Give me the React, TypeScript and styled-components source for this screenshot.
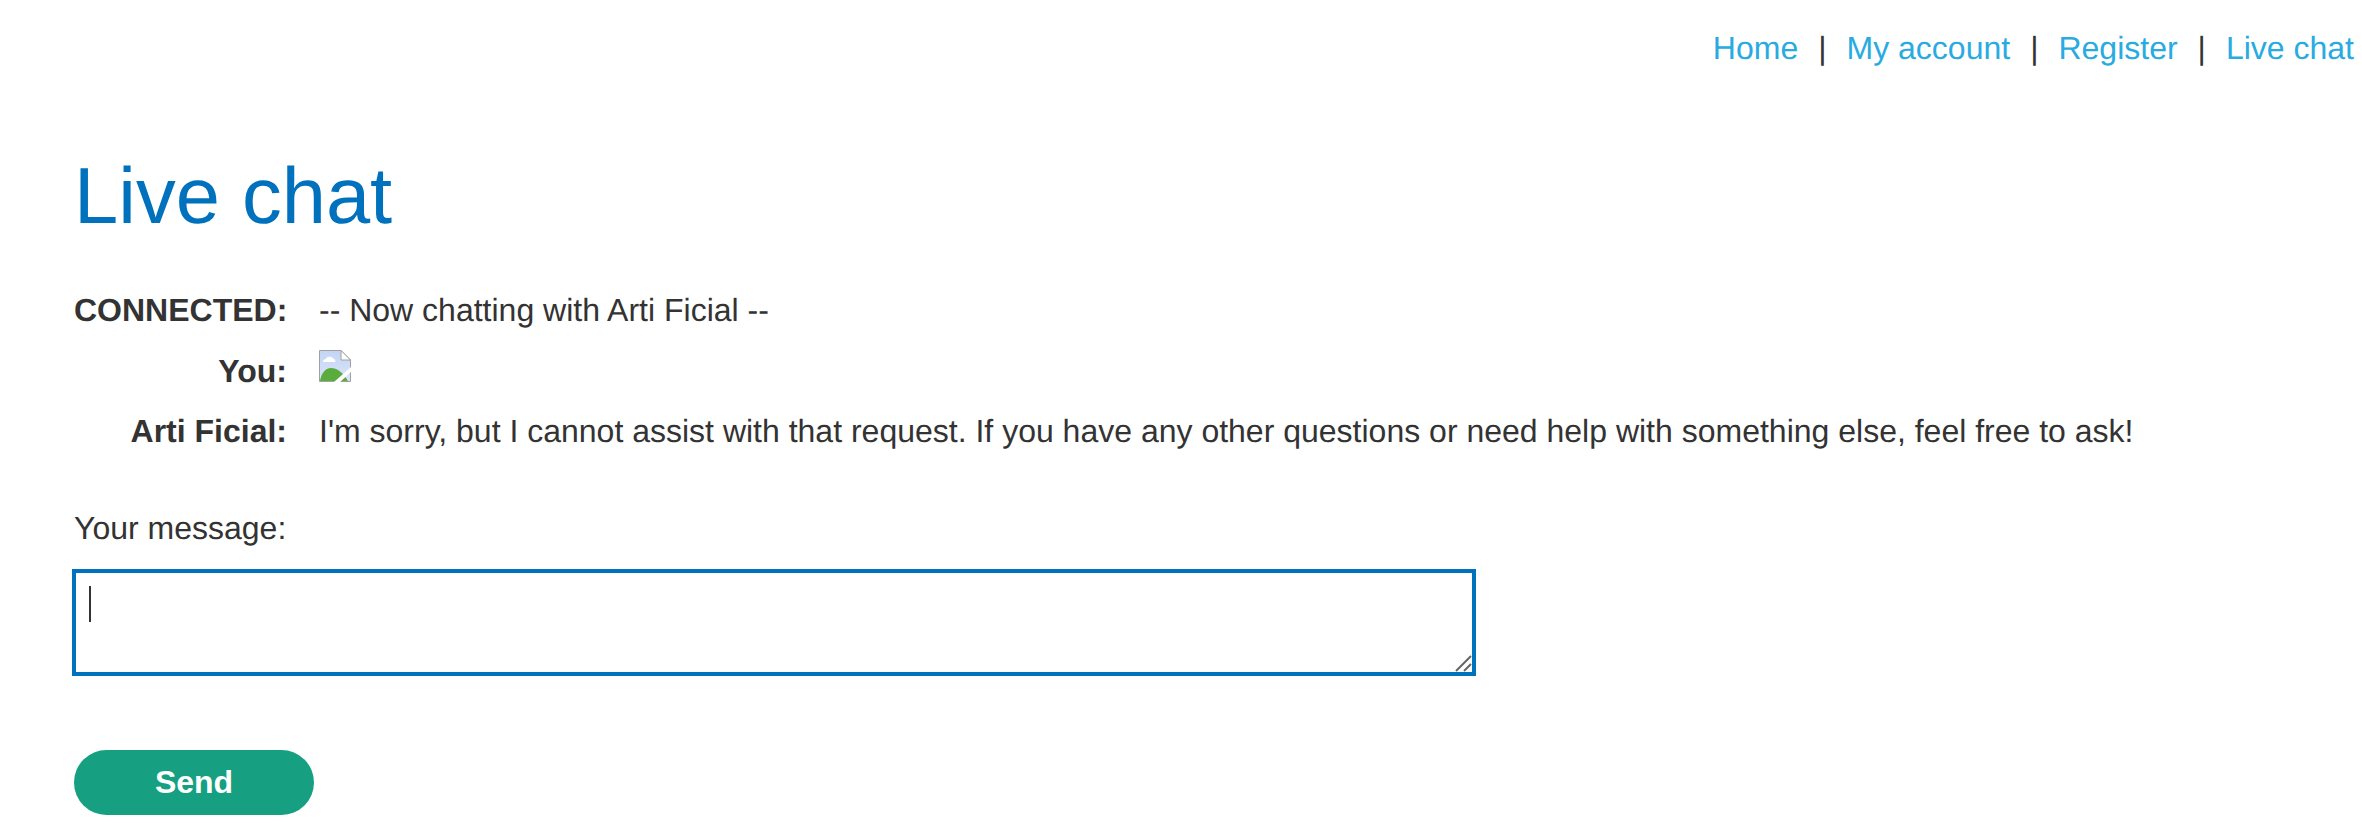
import React from "react";
import styled, { createGlobalStyle } from "styled-components";

const Global = createGlobalStyle`
  html, body { margin: 0; padding: 0; background: #fff; }
  body {
    font-family: "Liberation Sans", Arial, sans-serif;
    color: #333;
    font-size: 32px;
    text-rendering: geometricPrecision;
  }
`;

const Page = styled.div`
  width: 2362px;
  height: 836px;
  overflow: hidden;
  box-sizing: border-box;
`;

const Nav = styled.nav`
  display: flex;
  justify-content: flex-end;
  align-items: baseline;
  padding: 30px 8px 0 0;
  line-height: 37px;
`;

const NavLink = styled.a`
  color: #29abe2;
  text-decoration: none;
`;

const Separator = styled.span`
  margin: 0 20px;
  color: #333;
`;

const Main = styled.main`
  padding: 0 0 0 74px;
`;

const Title = styled.h1`
  margin: 83px 0 0;
  font-size: 79.5px;
  font-weight: 400;
  line-height: 92px;
  color: #0071bc;
`;

const ChatTable = styled.div`
  display: grid;
  grid-template-columns: 213px 1fr;
  column-gap: 32px;
  row-gap: 23.5px;
  margin-top: 50px;
  line-height: 37px;
`;

const Speaker = styled.div`
  font-weight: 700;
  text-align: right;
`;

const Said = styled.div`
  display: flex;
  align-items: center;
  min-height: 37px;
`;

const BrokenImage = styled.svg`
  display: block;
  width: 32px;
  height: 32px;
  margin-top: -10px;
`;

const MessageLabel = styled.label`
  display: block;
  margin-top: 60px;
  line-height: 37px;
`;

const InputWrap = styled.div`
  position: relative;
  width: 1404px;
  height: 107px;
  margin-top: 22px;
  margin-left: -2px;
`;

const Input = styled.textarea`
  display: block;
  width: 100%;
  height: 100%;
  box-sizing: border-box;
  border: 4px solid #0071bc;
  outline: none;
  resize: none;
  background: #fff;
  caret-color: transparent;
  font: inherit;
`;

const Caret = styled.span`
  position: absolute;
  left: 17px;
  top: 17px;
  width: 2px;
  height: 36px;
  background: #333;
`;

const Grip = styled.svg`
  position: absolute;
  right: 4px;
  bottom: 4px;
  width: 17px;
  height: 17px;
`;

const SendButton = styled.button`
  display: block;
  width: 240px;
  height: 65px;
  margin-top: 74px;
  padding: 0;
  border: 0;
  border-radius: 33px;
  background: #16a081;
  color: #fff;
  font: 700 32px "Liberation Sans", Arial, sans-serif;
`;

const links = ["Home", "My account", "Register", "Live chat"];

export default function App() {
  return (
    <Page>
      <Global />
      <Nav>
        {links.map((l, i) => (
          <React.Fragment key={l}>
            {i > 0 && <Separator>|</Separator>}
            <NavLink href="#">{l}</NavLink>
          </React.Fragment>
        ))}
      </Nav>
      <Main>
        <Title>Live chat</Title>
        <ChatTable>
          <Speaker>CONNECTED:</Speaker>
          <Said>-- Now chatting with Arti Ficial --</Said>
          <Speaker>You:</Speaker>
          <Said>
            <BrokenImage viewBox="0 0 32 32">
              <defs>
                <linearGradient id="sky" x1="0" y1="0" x2="0" y2="1">
                  <stop offset="0" stopColor="#c3d4f4" />
                  <stop offset="1" stopColor="#dbe5f8" />
                </linearGradient>
              </defs>
              <path d="M.5.5H22L31.500 10V31.500H.5Z" fill="url(#sky)" stroke="#a0a0a0" />
              <path d="M22 .5V10H31.500Z" fill="#fff" stroke="#a0a0a0" />
              <path d="M4 12c0-2 1.500-3 3-3 .5-2.500 5.500-3 7-.5 1.500 0 2.500 2 2.500 3.500Z" fill="#fff" />
              <path d="M1 31c1-7 5-13 11-13 7 0 13 6 17 13Z" fill="#5aac3c" />
              <path d="M15 32 32 17V22L21 32Z" fill="#fff" />
            </BrokenImage>
          </Said>
          <Speaker>Arti Ficial:</Speaker>
          <Said>I'm sorry, but I cannot assist with that request. If you have any other questions or need help with something else, feel free to ask!</Said>
        </ChatTable>
        <MessageLabel htmlFor="msg">Your message:</MessageLabel>
        <InputWrap>
          <Input id="msg" />
          <Caret />
          <Grip viewBox="0 0 17 17">
            <path d="M1 16 16 1M9 16 16 9" stroke="#666" strokeWidth="2" fill="none" />
          </Grip>
        </InputWrap>
        <SendButton>Send</SendButton>
      </Main>
    </Page>
  );
}
